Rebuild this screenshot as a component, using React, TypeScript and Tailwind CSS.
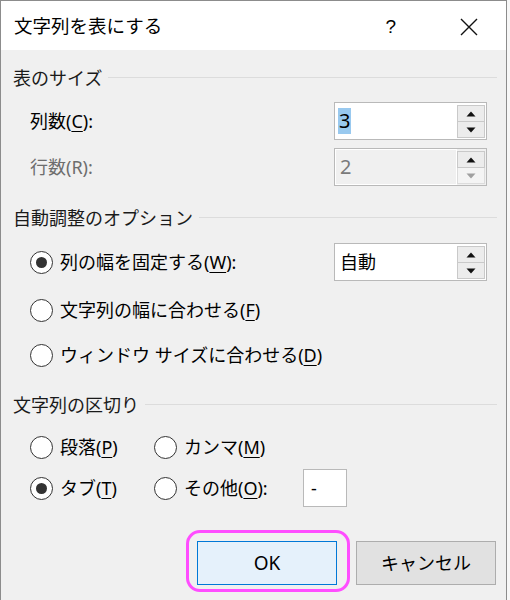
import type { ReactNode } from 'react'

const font = { fontFamily: '"Noto Sans", "Noto Sans CJK JP", sans-serif' }

function U({ children }: { children: ReactNode }) {
  return <span className="underline underline-offset-[3px] decoration-[1px]">{children}</span>
}

function Radio({ checked }: { checked?: boolean }) {
  return (
    <span className="w-[23px] h-[23px] rounded-full border-[1.5px] border-[#333] bg-white flex items-center justify-center shrink-0">
      {checked && <span className="w-[11px] h-[11px] rounded-full bg-[#333]" />}
    </span>
  )
}

function Arrow({ up, dim }: { up?: boolean; dim?: boolean }) {
  return (
    <svg width="10" height="6" viewBox="0 0 10 6">
      <path d={up ? 'M5 0.5 L9.5 5.5 L0.5 5.5 Z' : 'M0.5 0.5 L9.5 0.5 L5 5.5 Z'} fill={dim ? '#a0a0a0' : '#111'} />
    </svg>
  )
}

function Spin({ children, disabled }: { children: ReactNode; disabled?: boolean }) {
  return (
    <div className={`w-[153px] h-[38px] border border-[#b9b9b9] flex ${disabled ? 'bg-[#f0f0f0]' : 'bg-white'}`}>
      <div className={`flex-1 flex items-center pl-[3px] ${disabled ? 'bg-[#f0f0f0] border border-white' : ''}`}>{children}</div>
      <div className="w-[28px] flex flex-col pt-[2px] pb-[1px] mr-[1px]">
        <div className="flex-1 bg-[#ececec] border border-[#c9c9c9] flex items-center justify-center">
          <Arrow up />
        </div>
        <div className={`flex-1 border border-t-0 flex items-center justify-center ${disabled ? 'bg-[#f4f4f4] border-[#dcdcdc]' : 'bg-[#ececec] border-[#c9c9c9]'}`}>
          <Arrow dim={disabled} />
        </div>
      </div>
    </div>
  )
}

function Header({ children, className }: { children: ReactNode; className: string }) {
  return (
    <div className={`h-[28px] flex items-center pl-[12px] pr-[9px] ${className}`}>
      <span className="text-[#1a1a1a] whitespace-nowrap">{children}</span>
      <span className="flex-1 h-px bg-[#dcdcdc] ml-[6px] -mt-[2px]" />
    </div>
  )
}

export default function App() {
  return (
    <div className="w-[510px] h-[600px] bg-[#f7f7f7] text-[18px] leading-none" style={font}>
      <div className="w-[507px] h-[600px] border-l border-t border-r border-[#8c8c8c] flex flex-col bg-[#f0f0f0]">
        {/* title bar */}
        <div className="h-[49px] bg-white flex items-center pl-[13px] pt-[2px] text-black">
          <span className="text-[18.5px]">文字列を表にする</span>
          <span className="ml-auto mr-[64px] text-[19px]" style={{ fontFamily: '"Liberation Sans", sans-serif' }}>?</span>
          <svg width="18" height="18" viewBox="0 0 18 18" className="mr-[28px]">
            <path d="M1 1 L17 17 M17 1 L1 17" stroke="#111" strokeWidth="1.4" />
          </svg>
        </div>

        {/* 表のサイズ */}
        <Header className="mt-[14px]">表のサイズ</Header>
        <div className="mt-[10px] h-[38px] flex items-center justify-between pl-[29px] pr-[19px]">
          <span className="text-black">列数(<U>C</U>):</span>
          <Spin>
            <span className="bg-[#99c9ef] h-[26px] px-[1px] flex items-center text-black text-[20px]">3</span>
          </Spin>
        </div>
        <div className="mt-[8px] h-[38px] flex items-center justify-between pl-[29px] pr-[19px]">
          <span className="text-[#6d6d6d]">行数(R):</span>
          <Spin disabled>
            <span className="text-[#7a7a7a] text-[20px] pl-[1px]">2</span>
          </Spin>
        </div>

        {/* 自動調整のオプション */}
        <Header className="mt-[18px]">自動調整のオプション</Header>
        <div className="mt-[11px] h-[38px] flex items-center pl-[29px] pr-[19px]">
          <Radio checked />
          <span className="ml-[7px] text-black">列の幅を固定する(<U>W</U>):</span>
          <div className="ml-auto">
            <Spin>
              <span className="text-black pl-[2px]">自動</span>
            </Spin>
          </div>
        </div>
        <div className="mt-[10px] h-[38px] flex items-center pl-[29px]">
          <Radio />
          <span className="ml-[7px] text-black">文字列の幅に合わせる(<U>F</U>)</span>
        </div>
        <div className="mt-[7px] h-[38px] flex items-center pl-[29px]">
          <Radio />
          <span className="ml-[7px] text-black">ウィンドウ サイズに合わせる(<U>D</U>)</span>
        </div>

        {/* 文字列の区切り */}
        <Header className="mt-[17px]">文字列の区切り</Header>
        <div className="mt-[9px] h-[38px] grid grid-cols-[124px_1fr] items-center pl-[29px]">
          <div className="flex items-center">
            <Radio />
            <span className="ml-[7px] text-black">段落(<U>P</U>)</span>
          </div>
          <div className="flex items-center">
            <Radio />
            <span className="ml-[7px] text-black">カンマ(<U>M</U>)</span>
          </div>
        </div>
        <div className="mt-[3px] h-[38px] grid grid-cols-[124px_1fr] items-center pl-[29px]">
          <div className="flex items-center">
            <Radio checked />
            <span className="ml-[7px] text-black">タブ(<U>T</U>)</span>
          </div>
          <div className="flex items-center">
            <Radio />
            <span className="ml-[7px] w-[119px] text-black">その他(<U>O</U>):</span>
            <div className="w-[44px] h-[38px] bg-white border border-[#b9b9b9] flex items-center pl-[7px] text-black">-</div>
          </div>
        </div>

        {/* buttons */}
        <div className="mt-[34px] flex justify-end gap-[19px] pr-[10px]">
          <div className="relative">
            <div className="absolute -left-[11px] -top-[11px] w-[164px] h-[62px] border-[3px] border-[#ff4dff] rounded-[14px]" />
            <button type="button" className="w-[140px] h-[44px] bg-[#e5f1fb] border border-[#0078d7] text-black text-[19px]">OK</button>
          </div>
          <button type="button" className="w-[140px] h-[44px] bg-[#e1e1e1] border border-[#adadad] text-black text-[18px]">キャンセル</button>
        </div>
      </div>
    </div>
  )
}
